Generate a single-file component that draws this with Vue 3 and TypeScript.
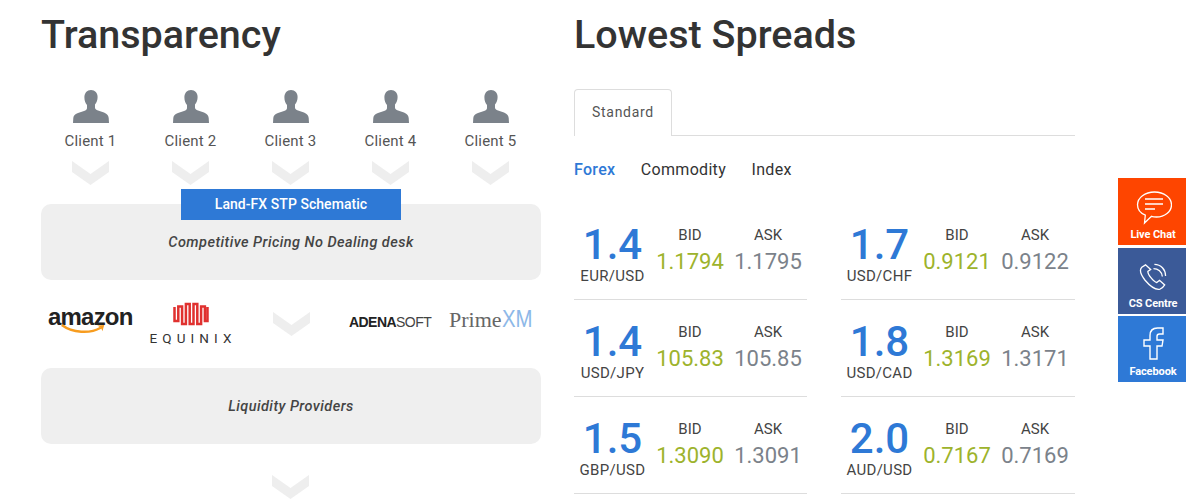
<script setup lang="ts">
const clients = [1, 2, 3, 4, 5]
interface Quote { pair: string; spread: string; bid: string; ask: string }
const quotes: Quote[] = [
  { pair: 'EUR/USD', spread: '1.4', bid: '1.1794', ask: '1.1795' },
  { pair: 'USD/CHF', spread: '1.7', bid: '0.9121', ask: '0.9122' },
  { pair: 'USD/JPY', spread: '1.4', bid: '105.83', ask: '105.85' },
  { pair: 'USD/CAD', spread: '1.8', bid: '1.3169', ask: '1.3171' },
  { pair: 'GBP/USD', spread: '1.5', bid: '1.3090', ask: '1.3091' },
  { pair: 'AUD/USD', spread: '2.0', bid: '0.7167', ask: '0.7169' },
]
</script>

<template>
  <div class="page">
    <section class="left">
      <h2 class="title">Transparency</h2>
      <div class="clients">
        <div v-for="c in clients" :key="c" class="client">
          <svg class="person" width="36" height="33" viewBox="0 0 36 33">
            <path d="M18 0c-4 0-6.600 3-6.600 7.500 0 3 1 5.800 2.600 7.500v3c0 1.500-1 2.200-3 3l-6 2C1.500 24 .5 26 .3 28L0 33h36l-.3-5c-.2-2-1.200-4-4.700-5.500l-6-2c-2-.8-3-1.500-3-3v-3c1.600-1.700 2.600-4.500 2.600-7.500C24.600 3 22 0 18 0z" fill="#7b828a" />
          </svg>
          <span class="client-name">Client {{ c }}</span>
          <svg class="chev" width="37" height="24" viewBox="0 0 37 24"><path d="M0 0l18.500 13L37 0v11L18.500 24 0 11z" fill="#eeeeee" /></svg>
        </div>
      </div>
      <div class="box box-top">
        <div class="banner">Land-FX STP Schematic</div>
        <em>Competitive Pricing No Dealing desk</em>
      </div>
      <div class="logos">
        <div class="amazon">
          <span class="amazon-word">amazon</span>
          <svg class="smile" width="46" height="11" viewBox="0 0 52 12">
            <path d="M2 1c12 9 32 10 44 3" fill="none" stroke="#f79c1f" stroke-width="2.800" />
            <path d="M42 1.500l8-.5-2 7c-.5-2.500-2-4.500-6-6.500z" fill="#f79c1f" />
          </svg>
        </div>
        <div class="equinix">
          <svg width="36" height="24" viewBox="0 0 36 24">
            <path d="M1.500 5V19H5.300V4.500H9.100V22H12.900V2H16.700V22H20.500V2H24.300V22H28.100V4.500H31.900V19H34.500V5" fill="none" stroke="#e0312f" stroke-width="2.500" />
          </svg>
          <span class="equinix-word">EQUINIX</span>
        </div>
        <svg class="chev mid-chev" width="37" height="24" viewBox="0 0 37 24"><path d="M0 0l18.500 13L37 0v11L18.500 24 0 11z" fill="#eeeeee" /></svg>
        <div class="adena"><b>ADENA</b>SOFT</div>
        <div class="prime">Prime<span>XM</span></div>
      </div>
      <div class="box box-low"><em>Liquidity Providers</em></div>
      <svg class="chev end-chev" width="37" height="24" viewBox="0 0 37 24"><path d="M0 0l18.500 13L37 0v11L18.500 24 0 11z" fill="#eeeeee" /></svg>
    </section>

    <section class="right">
      <h2 class="title">Lowest Spreads</h2>
      <div class="tabs"><div class="tab">Standard</div></div>
      <div class="subtabs">
        <span class="active">Forex</span>
        <span>Commodity</span>
        <span>Index</span>
      </div>
      <div class="grid">
        <div v-for="q in quotes" :key="q.pair" class="row">
          <div class="spread">
            <div class="spread-num">{{ q.spread }}</div>
            <div class="pair">{{ q.pair }}</div>
          </div>
          <div class="price">
            <div class="label">BID</div>
            <div class="bid">{{ q.bid }}</div>
          </div>
          <div class="price">
            <div class="label">ASK</div>
            <div class="ask">{{ q.ask }}</div>
          </div>
        </div>
      </div>
    </section>

    <aside class="side">
      <div class="side-btn chat">
        <svg class="ico-chat" width="36" height="36" viewBox="0 0 36 36" fill="none" stroke="#fff" stroke-width="1.300">
          <path d="M18.500 2c9.500 0 17 5.600 17 12.800 0 7-7 12.200-15 12.200-2 0-3.500-.2-5-.7L8.500 33l.8-7.800C4 23 1.500 19.500 1.500 14.800 1.500 7.600 9 2 18.500 2z" />
          <path d="M9 9h18M9 14h18M9 19h10" />
        </svg>
        <span>Live Chat</span>
      </div>
      <div class="side-btn cs">
        <svg class="ico-cs" width="28" height="28" viewBox="0 0 30 30" fill="none" stroke="#fff" stroke-width="1.400">
          <path d="M7 2L3 4.500C.5 7 1.500 12 6.500 18.500 12 25 18 29 22.500 28c2-.5 3.500-2 5-4.500l-5.500-5-3 2.500c-2-.5-4-2.500-6-5s-3.500-5-3.500-7l3-2z" />
          <path d="M15.500 6c5 0 9 3.500 9.500 8.500M16.500 1.500c7 0 12 5.500 12 12.500" />
        </svg>
        <span>CS Centre</span>
      </div>
      <div class="side-btn fb">
        <svg class="ico-fb" width="24" height="33" viewBox="0 0 24 33" fill="none" stroke="#fff" stroke-width="1.400">
          <path d="M8 32V19H2v-6h6V8.500C8 3.500 11 1 15.500 1H21v6h-3.500C15.500 7 15 8 15 9.500V13h6l-1 6h-5v13z" />
        </svg>
        <span>Facebook</span>
      </div>
    </aside>
  </div>
</template>

<style scoped>
.page {
  position: relative;
  display: flex;
  gap: 33px;
  width: 1186px;
  height: 503px;
  padding-left: 41px;
  box-sizing: border-box;
  overflow: hidden;
  font-family: Roboto, "Liberation Sans", sans-serif;
  color: #333;
  background: #fff;
}
.left { width: 500px; flex: none; }
.right { width: 501px; flex: none; }
.title {
  margin: 11px 0 0;
  font-size: 39.500px;
  line-height: 47px;
  font-weight: 500;
  color: #333;
}
.clients { display: flex; margin-top: 32px; }
.client { width: 100px; display: flex; flex-direction: column; align-items: center; height: 114px; }
.person { display: block; }
.client-name { font-size: 15px; line-height: 18px; margin-top: 9px; margin-right: 1px; color: #555; letter-spacing: 0.2px; }
.chev { display: block; }
.client .chev { margin-top: 11px; margin-right: 1px; }
.box {
  display: flex;
  align-items: center;
  justify-content: center;
  background: #efefef;
  border-radius: 10px;
  height: 76px;
  font-size: 14.500px;
  color: #444;
  letter-spacing: 0.45px;
  font-weight: 500;
}
.box-top { position: relative; box-sizing: border-box; }
.banner {
  position: absolute;
  left: 140px;
  top: -15px;
  width: 220px;
  height: 31px;
  line-height: 31px;
  text-align: center;
  background: #2e79d6;
  color: #fff;
  font-size: 14px;
  font-weight: 500;
  letter-spacing: 0.05px;
}
.logos { position: relative; display: flex; align-items: flex-start; height: 88px; }
.amazon { width: 84px; margin: 24px 0 0 7px; position: relative; flex: none; }
.amazon-word {
  display: block;
  font-family: "Liberation Sans", sans-serif;
  font-weight: 700;
  font-size: 24px;
  line-height: 26px;
  letter-spacing: -0.8px;
  color: #222;
}
.smile { position: absolute; left: 12px; top: 20px; }
.equinix { width: 85px; flex: none; margin: 22px 0 0 16px; display: flex; flex-direction: column; align-items: center; }
.equinix-word { font-size: 13.500px; font-weight: 400; letter-spacing: 5.100px; line-height: 14px; margin-top: 5px; color: #333; margin-right: -5px; white-space: nowrap; }
.mid-chev { flex: none; margin: 32px 0 0 40px; }
.adena { flex: none; margin: 34px 0 0 39px; width: 84px; font-size: 14px; line-height: 16px; letter-spacing: -0.55px; color: #444; font-family: "Liberation Sans", sans-serif; white-space: nowrap; }
.adena b { font-weight: 700; color: #222; }
.prime { flex: none; margin: 26px 0 0 16px; font-family: "Liberation Serif", serif; font-size: 22px; line-height: 26px; color: #666; white-space: nowrap; }
.prime span { display: inline-block; width: 28px; color: #8db8e8; font-family: "Liberation Sans", sans-serif; font-size: 24px; font-weight: 400; transform: scaleX(0.85); transform-origin: left center; }
.end-chev { margin: 31px 0 0 231px; }
.tabs { border-bottom: 1px solid #ddd; height: 46px; margin-top: 31px; display: flex; }
.tab {
  width: 98px;
  height: 47px;
  box-sizing: border-box;
  border: 1px solid #ddd;
  border-bottom: none;
  border-radius: 4px 4px 0 0;
  background: #fff;
  text-align: center;
  line-height: 44px;
  font-size: 14px;
  font-weight: 400;
  letter-spacing: 0.7px;
  color: #555;
}
.subtabs { display: flex; gap: 25.500px; margin-top: 24px; font-size: 16px; line-height: 19px; color: #333; letter-spacing: 0.3px; }
.subtabs .active { color: #2e79d6; font-weight: 500; }
.grid { display: grid; grid-template-columns: 233px 234px; column-gap: 34px; margin-top: 24px; }
.row {
  display: flex;
  height: 97px;
  box-sizing: border-box;
  border-bottom: 1px solid #ddd;
  padding-top: 15px;
}
.spread { width: 77px; flex: none; text-align: center; white-space: nowrap; }
.spread-num { font-size: 42px; line-height: 44px; margin-top: 5px; font-weight: 500; color: #2e79d6; }
.pair { font-size: 15px; line-height: 16px; color: #444; margin-top: 1px; letter-spacing: 0.3px; }
.price { width: 78px; flex: none; text-align: center; }
.label { font-size: 15px; line-height: 16px; margin-top: 9px; color: #444; }
.bid, .ask { font-size: 22px; line-height: 26px; margin-top: 6px; }
.bid { color: #9db32c; }
.ask { color: #7b828a; }
.side { position: absolute; right: 0; top: 178px; width: 68px; display: flex; flex-direction: column; gap: 2px; }
.side-btn {
  height: 66px;
  display: flex;
  flex-direction: column;
  align-items: center;
  justify-content: flex-end;
  color: #fff;
  font-size: 11px;
  font-weight: 700;
  letter-spacing: -0.1px;
  padding: 0 0 4px 2px;
  box-sizing: border-box;
  line-height: 13px;
}
.ico-chat { margin: 0 0 2px 2px; }
.ico-cs { margin: 0 0 6px 0; }
.ico-fb { margin: 0 0 5px 2px; }
.chat { background: #fe4500; height: 67px; margin-bottom: 1px; }
.cs { background: #3b5a98; }
.fb { background: #2e79d6; }
</style>
